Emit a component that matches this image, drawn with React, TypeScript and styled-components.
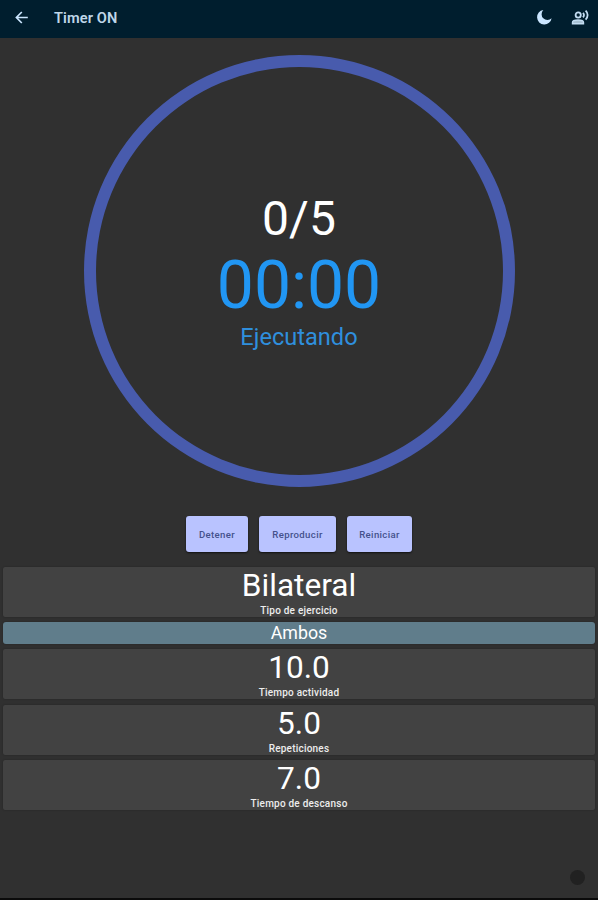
import React from 'react';
import styled, { createGlobalStyle } from 'styled-components';

const GlobalStyle = createGlobalStyle`
  * { box-sizing: border-box; }
  body { margin: 0; background: #303030; font-family: Roboto, sans-serif; }
`;

const Screen = styled.main`
  display: flex;
  flex-direction: column;
  height: 900px;
  background: #303030;
  border-bottom: 2px solid #0b0b0b;
`;

const AppBar = styled.header`
  display: flex;
  align-items: center;
  flex: none;
  height: 38px;
  padding: 0 9px 3px 15px;
  background: #001e2e;
  color: #cbe6ff;
`;

const Title = styled.h1`
  flex: 1;
  margin: 1px 0 0 25px;
  font-size: 14.6px;
  line-height: 20px;
  font-weight: 600;
  letter-spacing: 0.1px;
  color: #bfd6e8;
`;

const Actions = styled.div`
  display: flex;
  align-items: center;
  gap: 19px;
`;

const DialArea = styled.section`
  display: flex;
  justify-content: center;
  flex: none;
  height: 472px;
  padding-top: 17px;
`;

const Dial = styled.div`
  display: flex;
  flex-direction: column;
  align-items: center;
  width: 431px;
  height: 432px;
  padding-top: 121px;
  border: 12.5px solid #485bad;
  border-radius: 50%;
`;

const DialText = styled.div<{ $size: number; $line: number; $color: string }>`
  font-size: ${(p) => p.$size}px;
  line-height: ${(p) => p.$line}px;
  color: ${(p) => p.$color};
  white-space: nowrap;
`;

const Controls = styled.div`
  display: flex;
  justify-content: center;
  flex: none;
  gap: 11px;
  height: 57px;
  padding-top: 6px;
`;

const ControlButton = styled.button<{ $width: number }>`
  width: ${(p) => p.$width}px;
  height: 36px;
  padding: 1px 0 0;
  border: 0;
  border-radius: 3px;
  background: #b9c3ff;
  box-shadow: 0 1px 2px rgba(0, 0, 0, 0.65);
  color: #44518c;
  font: 500 9.6px/35px Roboto, sans-serif;
  letter-spacing: 0.35px;
`;

const Cards = styled.section`
  display: grid;
  grid-template-rows: 49.5px 21.5px 50px 50px 49.5px;
  row-gap: 5.5px;
  padding: 0 3px;
`;

const Card = styled.article`
  display: flex;
  flex-direction: column;
  align-items: center;
  border-radius: 2px;
  background: #424242;
  box-shadow: 0 0 2px rgba(0, 0, 0, 0.3);
  color: #fff;
`;

const Banner = styled(Card)`
  border-radius: 3px;
  background: #607d8b;
  font-size: 17.8px;
  line-height: 21px;
`;

const Value = styled.div`
  font-size: 31.6px;
  line-height: 38px;
`;

const Caption = styled.div`
  font-size: 10px;
  line-height: 12px;
  font-weight: 500;
  letter-spacing: 0.22px;
  color: #ededed;
`;

const CornerDot = styled.span`
  position: absolute;
  left: 569.5px;
  top: 870px;
  width: 15px;
  height: 15px;
  border-radius: 50%;
  background: #212121;
`;

const BackIcon = () => (
  <svg width="14" height="14" viewBox="0 0 14 14" fill="none" stroke="#cbe6ff" strokeWidth="1.7">
    <path d="M12.8 6.5H2M6.8 1L1.4 6.5L6.8 12" />
  </svg>
);

const MoonIcon = () => (
  <svg width="16" height="16" viewBox="0 0 16 16" fill="#cbe6ff">
    <path d="M7.3 0A7.3 7.3 0 1 0 15.6 8.3A4.4 4.4 0 0 1 7.3 0z" />
  </svg>
);

const VoiceIcon = () => (
  <svg width="18" height="16" viewBox="0 0 18 16" fill="none" stroke="#c3ddf2">
    <circle cx="7.2" cy="5" r="2.6" strokeWidth="1.8" />
    <path d="M1.5 13.8v-1.3c0-1.6 2.9-2.5 5.5-2.5s5.5.9 5.5 2.5v1.3z" strokeWidth="1.4" fill="#a8c1d3" />
    <path d="M12 2.8c1.1 1.3 1.1 3.3 0 4.6M14.6 .6c2.7 2.6 2.7 6.4 0 9" strokeWidth="1.8" />
  </svg>
);

const buttons = [
  { label: 'Detener', width: 62 },
  { label: 'Reproducir', width: 77 },
  { label: 'Reiniciar', width: 65 },
];

const Stat = ({ value, caption }: { value: string; caption: string }) => (
  <Card>
    <Value>{value}</Value>
    <Caption>{caption}</Caption>
  </Card>
);

export default function App() {
  return (
    <>
      <GlobalStyle />
      <Screen>
        <AppBar>
          <BackIcon />
          <Title>Timer ON</Title>
          <Actions>
            <MoonIcon />
            <VoiceIcon />
          </Actions>
        </AppBar>
        <DialArea>
          <Dial>
            <DialText $size={48} $line={61} $color="#fff">0/5</DialText>
            <DialText $size={66} $line={73} $color="#2196f3">00:00</DialText>
            <DialText $size={23.6} $line={31} $color="#2f8fdd">Ejecutando</DialText>
          </Dial>
        </DialArea>
        <Controls>
          {buttons.map((b) => (
            <ControlButton key={b.label} $width={b.width}>{b.label}</ControlButton>
          ))}
        </Controls>
        <Cards>
          <Stat value="Bilateral" caption="Tipo de ejercicio" />
          <Banner>Ambos</Banner>
          <Stat value="10.0" caption="Tiempo actividad" />
          <Stat value="5.0" caption="Repeticiones" />
          <Stat value="7.0" caption="Tiempo de descanso" />
        </Cards>
        <CornerDot />
      </Screen>
    </>
  );
}
